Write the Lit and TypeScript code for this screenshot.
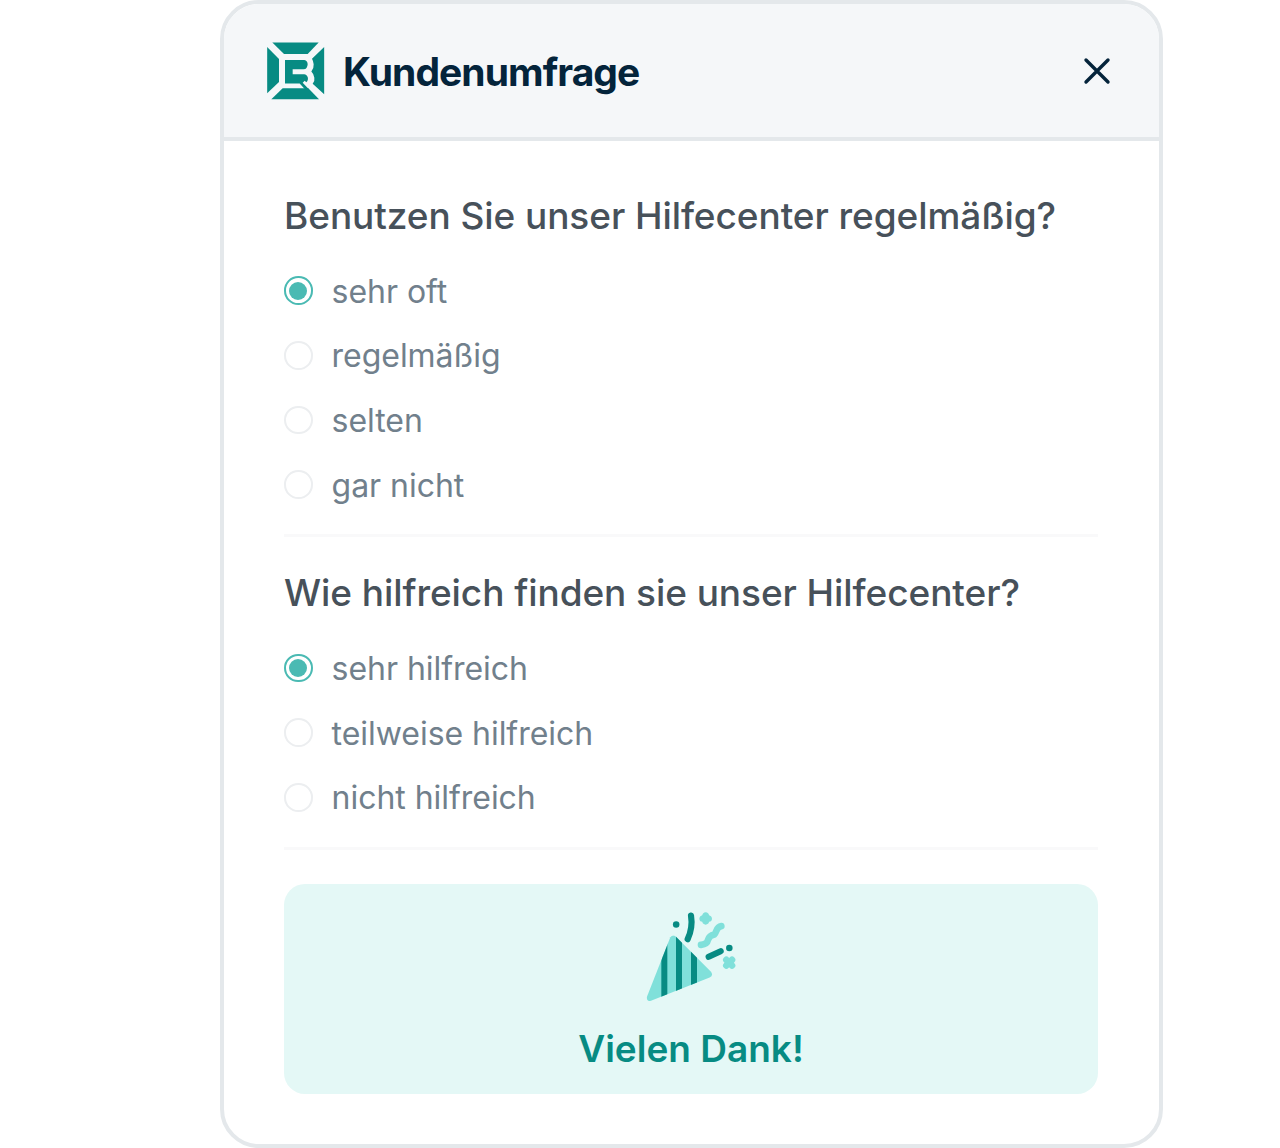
import {html, css, svg, LitElement} from 'lit';
import {customElement, property} from 'lit/decorators.js';
import {classMap} from 'lit/directives/class-map.js';

const logo = svg`
  <path d="M52 36.500H191L158 71H87Z" />
  <path d="M36.500 50L72 86V155L36.500 189Z" />
  <path d="M49 207L83 174H160L192 207Z" />
  <path d="M207.500 50V192L173 160Q180 152 178 142Q176 130 169 123.500Q177 115 176 102Q175 92 171 85Z" />
  <path d="M90 89H148Q158 91 158 102Q157 117 146 117H113V131.500H148Q159 134 159 146Q158 153 154 156L149 151.500L143 157.500L161 176H149L134 159.500H90Z" />
`;

const popper = svg`
  <defs>
    <clipPath id="cone">
      <path d="M106 112Q114 102 123 111L228 216Q236 227 224 233L48 303Q36 306 35 293Z" />
    </clipPath>
  </defs>
  <g clip-path="url(#cone)">
    <rect class="light" x="30" y="100" width="210" height="210" />
    <rect class="dark" x="79" y="100" width="18" height="210" />
    <rect class="dark" x="123" y="100" width="18" height="210" />
    <rect class="dark" x="168" y="100" width="18" height="210" />
  </g>
  <circle class="dark" cx="123.500" cy="74" r="9.800" />
  <circle class="dark" cx="283" cy="144.500" r="9.800" />
  <path class="dark-line" d="M168 47Q174 84 158 118" />
  <path class="dark-line" d="M221 171L257 154" />
  <path class="light-line" d="M198 135C208 134 217 130 219 120C222 109 229 106 238 104C245 98 243 81 259 79" />
  <path class="light" d="M204 41Q212 34 220 41Q221 48 228 49Q234 56 228 64Q221 64 220 71Q212 78 204 71Q203 64 196 64Q190 56 196 49Q203 48 204 41Z" />
  <path class="light" d="M276 181H290V195H276Z" />
  <path class="light-line" d="M274 180L291 197M291 180L274 197" />
`;

@customElement('survey-option')
export class SurveyOption extends LitElement {
  @property({ type: String }) public label = '';
  @property({ type: Boolean, reflect: true }) public checked = false;

  static styles = css`
    :host {
      display: flex;
      align-items: center;
      gap: 19px;
      height: 64.67px;
      color: #71808c;
      font-size: 32px;
      font-weight: 400;
      letter-spacing: -0.04px;
    }

    .radio {
      display: flex;
      align-items: center;
      justify-content: center;
      flex: none;
      box-sizing: border-box;
      width: 28.6px;
      height: 28.6px;
      border: 2px solid #eceef0;
      border-radius: 50%;
    }

    .radio.on {
      border-color: #4abab3;
    }

    .radio.on::after {
      content: '';
      width: 18px;
      height: 18px;
      border-radius: 50%;
      background: #4abab3;
    }

    .label {
      padding-top: 2px;
      line-height: 40px;
    }
  `;

  render() {
    return html`
      <span class=${classMap({ radio: true, on: this.checked })}></span>
      <span class="label">${this.label}</span>
    `;
  }
}

@customElement('survey-question')
export class SurveyQuestion extends LitElement {
  @property({ type: String }) public question = '';
  @property({ type: Array }) public options: string[] = [];

  static styles = css`
    :host {
      display: block;
      padding-bottom: 17.4px;
      border-bottom: 3px solid #f9f9fa;
    }

    h2 {
      margin: 0 0 18.9px;
      color: #47515a;
      font-size: 37px;
      font-weight: 500;
      letter-spacing: -0.07px;
      line-height: 48px;
      white-space: nowrap;
    }
  `;

  render() {
    return html`
      <h2>${this.question}</h2>
      ${this.options.map((o, i) => html`<survey-option .label=${o} ?checked=${i === 0}></survey-option>`)}
    `;
  }
}

@customElement('app-root')
export class AppRoot extends LitElement {
  static styles = css`
    :host {
      display: block;
      height: 1148px;
      padding-left: 220px;
      box-sizing: border-box;
      background: #fff;
      font-family: Inter, 'Liberation Sans', sans-serif;
    }

    .card {
      box-sizing: border-box;
      width: 942.5px;
      height: 1147.5px;
      border: 4px solid #e4e8eb;
      border-radius: 39px;
      overflow: hidden;
    }

    header {
      display: flex;
      align-items: center;
      box-sizing: border-box;
      height: 137px;
      padding: 0 48px 0 43px;
      border-bottom: 4px solid #e4e8eb;
      background: #f5f7f9;
    }

    .logo {
      width: 58px;
      height: 58px;
      fill: #078b83;
    }

    h1 {
      flex: 1;
      margin: 2px 0 0 18px;
      color: #04243b;
      font-size: 39px;
      font-weight: 700;
      letter-spacing: -0.95px;
      line-height: 48px;
    }

    .close {
      width: 28px;
      height: 28px;
      fill: none;
      stroke: #04243b;
      stroke-width: 3.4;
      stroke-linecap: round;
    }

    main {
      padding: 50.5px 60.5px 0 60px;
    }

    survey-question + survey-question {
      margin-top: 31.5px;
    }

    .thanks {
      display: flex;
      flex-direction: column;
      align-items: center;
      box-sizing: border-box;
      height: 210px;
      margin-top: 33.5px;
      padding-top: 27px;
      border-radius: 21px;
      background: #e4f8f6;
      color: #078b83;
      font-size: 37px;
      font-weight: 600;
      line-height: 48px;
    }

    .popper {
      width: 90px;
      height: 90px;
      margin-bottom: 24px;
    }

    .light {
      fill: #80e0da;
    }

    .dark {
      fill: #078b83;
    }

    .light-line,
    .dark-line {
      fill: none;
      stroke: #80e0da;
      stroke-width: 20;
      stroke-linecap: round;
    }

    .dark-line {
      stroke: #078b83;
      stroke-width: 18.5;
    }
  `;

  render() {
    return html`
      <div class="card">
        <header>
          <svg class="logo" viewBox="36 35 174 174">${logo}</svg>
          <h1>Kundenumfrage</h1>
          <svg class="close" viewBox="0 0 28 28"><path d="M3 3L25 25M25 3L3 25" /></svg>
        </header>
        <main>
          <survey-question
            question="Benutzen Sie unser Hilfecenter regelmäßig?"
            .options=${['sehr oft', 'regelmäßig', 'selten', 'gar nicht']}
          ></survey-question>
          <survey-question
            question="Wie hilfreich finden sie unser Hilfecenter?"
            .options=${['sehr hilfreich', 'teilweise hilfreich', 'nicht hilfreich']}
          ></survey-question>
          <div class="thanks">
            <svg class="popper" viewBox="33 33.5 270 270">${popper}</svg>
            <span>Vielen Dank!</span>
          </div>
        </main>
      </div>
    `;
  }
}
